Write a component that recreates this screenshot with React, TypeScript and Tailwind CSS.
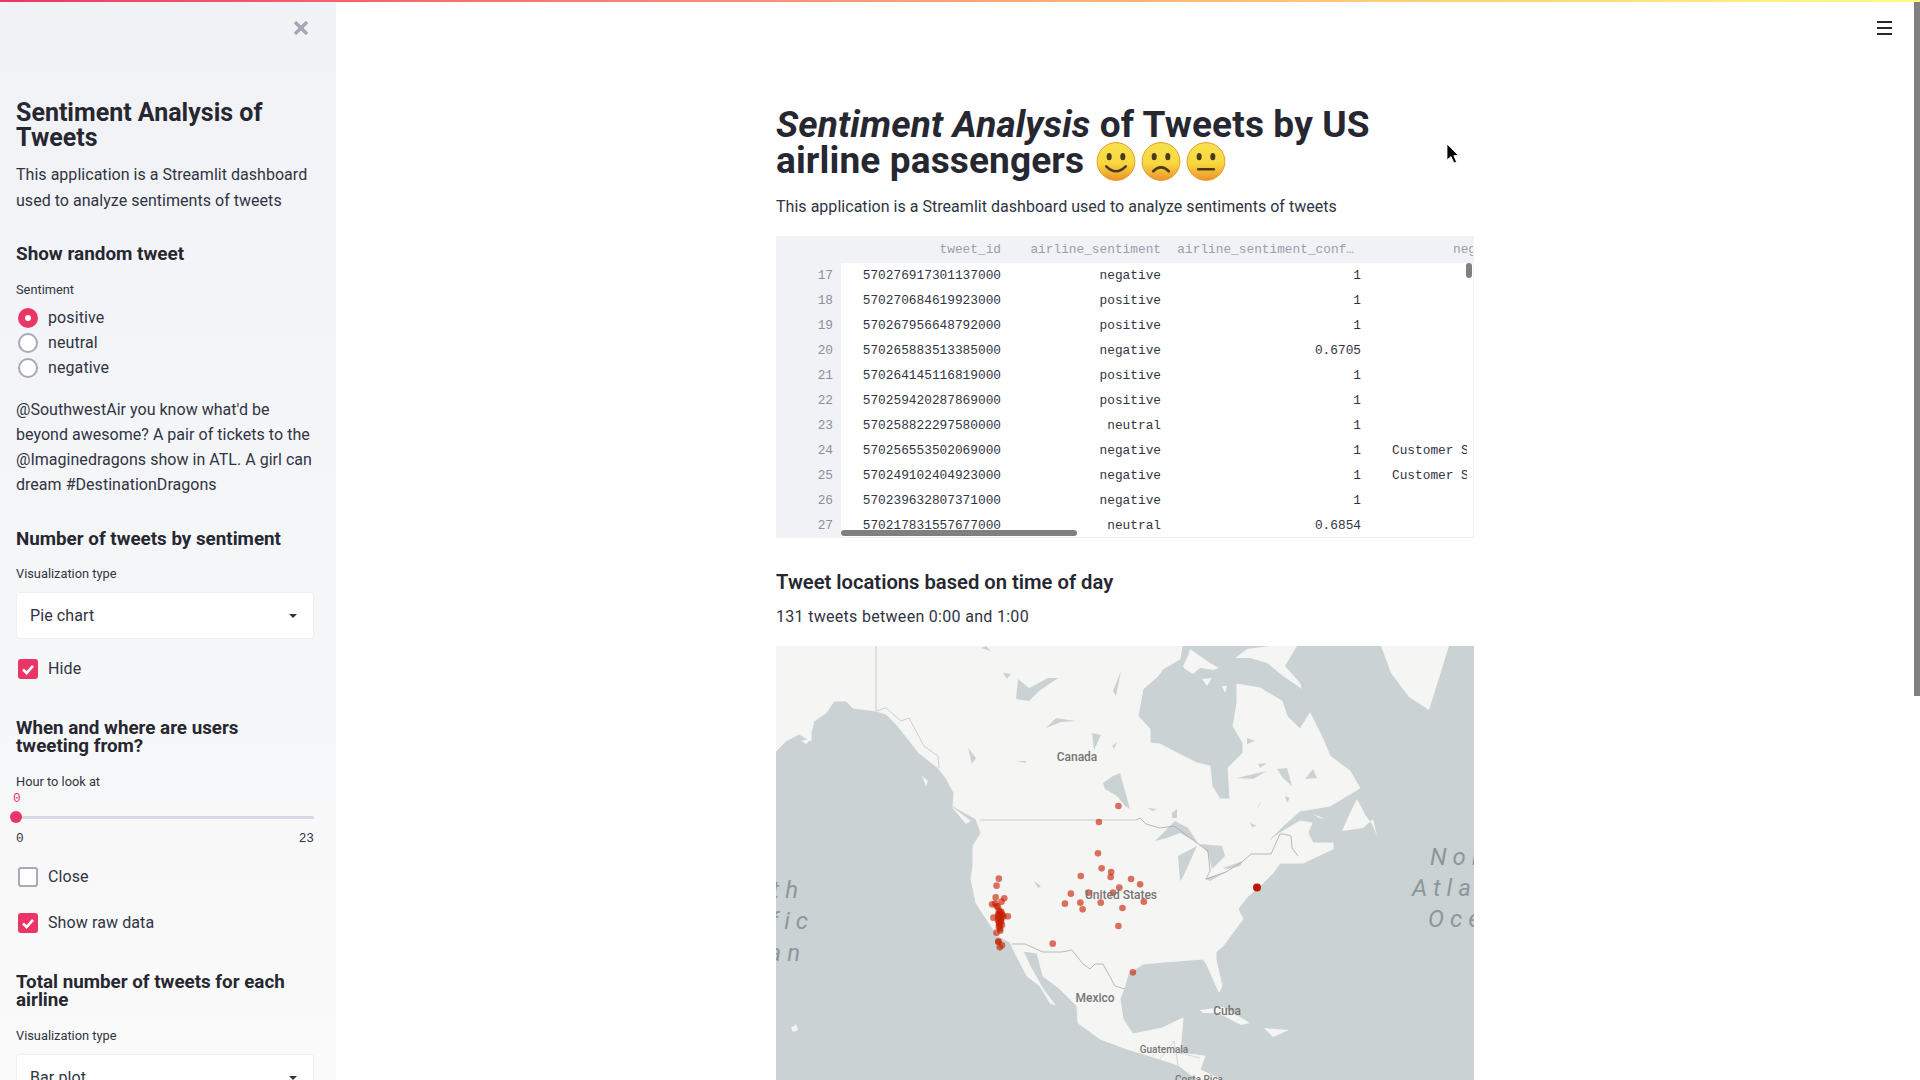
import React from "react";

const rows = [
  ["17", "570276917301137000", "negative", "1", ""],
  ["18", "570270684619923000", "positive", "1", ""],
  ["19", "570267956648792000", "positive", "1", ""],
  ["20", "570265883513385000", "negative", "0.6705", ""],
  ["21", "570264145116819000", "positive", "1", ""],
  ["22", "570259420287869000", "positive", "1", ""],
  ["23", "570258822297580000", "neutral", "1", ""],
  ["24", "570256553502069000", "negative", "1", "Customer Service Issue"],
  ["25", "570249102404923000", "negative", "1", "Customer Service Issue"],
  ["26", "570239632807371000", "negative", "1", ""],
  ["27", "570217831557677000", "neutral", "0.6854", ""],
];

const dots: [number, number][] = [
  [769,498],[726,546],[724,640],[732,685],[753,696],[752,711],[686,708],[797,717],[817,733],[771,743],[757,758],[703,758],[664,761],[651,791],[685,788],[730,788],[690,808],[778,804],[825,785],[769,858],[624,911],[801,997],
  [505,716],[500,737],[498,772],[517,775],[511,785],[490,793],[500,798],[497,790],[503,800],[505,812],[510,815],[505,820],[512,822],[515,830],[493,833],[525,829],[505,830],[510,836],[503,840],[510,845],[506,850],[512,855],[505,860],[508,866],[508,872],[500,878],[504,904],[504,906],[512,916],[507,922],[507,828],[503,826],[509,842],[505,848],[507,858],[508,818],[513,826],[505,836],
];

const land = "M0 105 L10 95 L23 88 L35 95 L35 87 L38 75 L50 67 L58 55 L70 55 L77 62 L100 65 L110 68 L120 78 L128 88 L143 107 L162 122 L170 132 L178 147 L177 160 L200 173 L205 187 L202 192 L197 200 L197 220 L195 233 L200 257 L213 277 L222 290 L234 296 L239 307 L251 330 L264 340 L274 357 L279 359 L267 343 L254 320 L247 305 L261 307 L267 330 L284 343 L301 360 L302 377 L324 393 L351 403 L374 410 L402 419 L422 434 L447 434 L424 424 L429 410 L404 407 L407 372 L386 382 L357 388 L347 373 L344 353 L349 340 L352 328 L367 318 L388 316 L427 313 L431 319 L443 346 L446 340 L440 314 L440 306 L447 300 L467 273 L462 263 L472 250 L481 243 L497 227 L504 217 L527 217 L557 203 L557 197 L537 197 L532 187 L536 177 L524 175 L504 187 L489 198 L507 180 L524 165 L554 160 L584 142 L574 125 L554 110 L547 93 L534 67 L524 83 L511 70 L506 55 L484 42 L461 38 L461 57 L457 80 L467 97 L467 107 L452 122 L454 153 L444 153 L436 140 L434 120 L421 117 L401 107 L384 98 L374 97 L374 83 L362 70 L367 43 L382 30 L387 23 L404 13 L406 0 L0 0 Z";

const islands = [
  "M407 20 L412 10 L414 3 L424 10 L434 17 L443 22 L437 24 L424 22 L417 28 L409 23 Z",
  "M459 12 L471 3 L494 0 L521 0 L509 20 L524 37 L526 43 L507 30 L491 17 L474 12 Z",
  "M426 33 L436 32 L431 40 Z",
  "M446 40 L451 40 L449 47 Z",
  "M605 0 L673 0 L653 64 L633 51 L615 27 Z",
  "M581 153 L574 167 L566 185 L587 182 L597 173 L601 190 L596 178 L590 170 Z",
  "M537 168 L549 173 L543 172 Z",
  "M424 364 L447 361 L474 377 L465 379 L442 367 L427 367 Z",
  "M488 382 L513 384 L497 391 Z",
  "M15 382 L20 378 L22 384 L17 386 Z",
  "M25 95 L36 92 L30 98 Z",
  "M130 85 L140 100 L150 112 L138 100 Z",
  "M146 130 L152 135 L150 140 Z",
  "M175 160 L195 175 L190 178 Z",
];

const lakes = [
  "M242 33 L253 42 L272 32 L282 32 L263 45 L253 55 L240 53 Z",
  "M270 82 L280 72 L300 75 L285 76 Z",
  "M316 87 L325 89 L318 104 Z",
  "M227 27 L235 28 L231 33 Z",
  "M205 2 L215 5 L210 0 Z",
  "M327 137 L337 130 L344 127 L354 163 L349 160 L341 150 L329 143 Z",
  "M379 195 L399 175 L412 182 L422 197 L404 187 L391 192 Z",
  "M402 210 L421 200 L406 233 L404 235 Z",
  "M424 198 L446 200 L449 210 L436 223 L432 207 Z",
  "M429 233 L452 225 L434 235 Z",
  "M447 222 L467 215 L464 220 L452 223 Z",
  "M461 132 L491 125 L477 133 Z",
  "M501 123 L511 122 L516 140 L507 132 Z",
  "M529 133 L537 123 L541 132 Z",
  "M481 163 L487 153 L482 160 Z",
  "M509 150 L514 152 L511 157 Z",
  "M474 177 L481 180 L476 181 Z",
  "M396 167 L401 163 L401 172 L396 172 Z",
  "M372 162 L381 163 L376 165 Z",
  "M471 92 L479 95 L471 98 Z",
  "M482 118 L491 117 L484 122 Z",
  "M240 115 L250 115 L250 117 Z",
  "M258 235 L265 240 L262 242 Z",
  "M336 100 L341 96 L338 103 Z",
  "M192 102 L200 112 L196 118 Z",
  "M337 45 L345 25 L340 50 Z",
];

function Emoji({ id, mouth }: { id: string; mouth: string }) {
  return (
    <svg viewBox="0 0 40 40" className="inline-block w-[40px] h-[39px] -my-[4px] ml-[2px] mr-[3px] align-[-4px]">
      <defs>
        <linearGradient id={id} x1="0" y1="0" x2="0" y2="1">
          <stop offset="0" stopColor="#f9e04f" />
          <stop offset="0.55" stopColor="#f8d840" />
          <stop offset="1" stopColor="#ec9428" />
        </linearGradient>
      </defs>
      <circle cx="20" cy="20" r="19.4" fill={"url(#" + id + ")"} stroke="#e39a2c" strokeWidth="1" />
      <ellipse cx="13" cy="15" rx="2.6" ry="3.6" fill="#4a3a1c" />
      <ellipse cx="27" cy="15" rx="2.6" ry="3.6" fill="#4a3a1c" />
      <path d={mouth} fill="none" stroke="#4a3a1c" strokeWidth="2.6" strokeLinecap="round" />
    </svg>
  );
}

function RadioRow({ label, on }: { label: string; on?: boolean }) {
  return (
    <div className="flex items-center h-[25px]">
      <span className={on ? "ml-[2px] w-[20px] h-[20px] rounded-full bg-[#ea3566] flex items-center justify-center" : "ml-[2px] w-[20px] h-[20px] rounded-full border-2 border-[#a6aab6] bg-white"}>
        {on && <span className="w-[6px] h-[6px] rounded-full bg-white" />}
      </span>
      <span className="ml-[10px] text-[16px] tracking-[0.1px] text-[#303442]">{label}</span>
    </div>
  );
}

function Check({ label, on }: { label: string; on?: boolean }) {
  return (
    <div className="flex items-center h-[24px]">
      <span className={on ? "ml-[2px] w-[20px] h-[20px] rounded-[3px] bg-[#ea3566] flex items-center justify-center" : "ml-[2px] w-[20px] h-[20px] rounded-[3px] border-2 border-[#a6aab6] bg-white"}>
        {on && (
          <svg viewBox="0 0 20 20" className="w-[20px] h-[20px]">
            <path d="M5 10.5 L8.6 14 L15 6.8" fill="none" stroke="#fff" strokeWidth="2.6" />
          </svg>
        )}
      </span>
      <span className="ml-[10px] text-[16px] tracking-[0.1px] text-[#303442]">{label}</span>
    </div>
  );
}

function Select({ label }: { label: string }) {
  return (
    <div className="ml-[1px] w-[296px] h-[45px] bg-white rounded-[3px] shadow-[0_0_0_1px_#eef0f4] flex items-center justify-between pl-[13px] pr-[16px]">
      <span className="text-[16px] tracking-[0.1px] text-[#303442]">{label}</span>
      <span className="w-0 h-0 border-x-[4px] border-x-transparent border-t-[4px] border-t-[#303442]" />
    </div>
  );
}

const mono = "font-['Liberation_Mono',monospace] text-[12.8px]";
const oceanLabel = "absolute -translate-y-1/2 text-[24px] italic tracking-[6px] text-[#8d9799] whitespace-nowrap";
const placeLabel = "absolute -translate-x-1/2 -translate-y-1/2 font-medium text-[#757575] whitespace-nowrap";

export default function App() {
  return (
    <div className="relative flex h-screen w-full overflow-hidden bg-white font-['Roboto','Noto_Sans',sans-serif] text-[#262730]">
      <div className="absolute top-0 left-0 right-0 h-[2px] z-20 bg-gradient-to-r from-[#ea3566] to-[#fffd80]" />

      <aside className="w-[336px] shrink-0 h-full overflow-hidden bg-gradient-to-b from-[#f0f2f6] to-[#fafafa] pl-[16px] pr-[22px]">
        <div className="h-[56px] flex justify-end items-start pt-[21px] pr-[6px]">
          <svg viewBox="0 0 14 14" className="w-[14px] h-[14px]">
            <path d="M1 1 L13 13 M13 1 L1 13" stroke="#a3a8b4" strokeWidth="3.4" />
          </svg>
        </div>
        <h2 className="mt-[45px] text-[25px] leading-[24.5px] font-bold text-[#262730]">Sentiment Analysis of Tweets</h2>
        <p className="mt-[12px] text-[16px] leading-[25.6px] tracking-[0.03px] text-[#303442]">This application is a Streamlit dashboard used to analyze sentiments of tweets</p>
        <h3 className="mt-[32px] text-[18.9px] leading-[18px] font-bold">Show random tweet</h3>
        <div className="mt-[19px] text-[12.8px] leading-[16px] text-[#303442]">Sentiment</div>
        <div className="mt-[7px]">
          <RadioRow label="positive" on />
          <RadioRow label="neutral" />
          <RadioRow label="negative" />
        </div>
        <p className="mt-[17px] text-[16px] leading-[25px] tracking-[0.03px] text-[#303442]">@SouthwestAir you know what'd be beyond awesome? A pair of tickets to the @Imaginedragons show in ATL. A girl can dream #DestinationDragons</p>
        <h3 className="mt-[33px] text-[18.8px] leading-[18px] font-bold">Number of tweets by sentiment</h3>
        <div className="mt-[18px] text-[12.8px] leading-[16px] text-[#303442]">Visualization type</div>
        <div className="mt-[11px]"><Select label="Pie chart" /></div>
        <div className="mt-[19px]"><Check label="Hide" on /></div>
        <h3 className="mt-[38px] text-[18.8px] leading-[18px] font-bold">When and where are users tweeting from?</h3>
        <div className="mt-[19px] text-[12.8px] leading-[16px] text-[#303442]">Hour to look at</div>
        <div className="mt-[2px] -ml-[3px] text-[12.8px] leading-[14px] text-[#ea3566] font-['Liberation_Mono',monospace]">0</div>
        <div className="relative mt-[5px] h-[12px] flex items-center">
          <div className="w-full h-[3px] rounded-full bg-[#d6dae4]" />
          <div className="absolute left-[-6px] top-0 w-[12px] h-[12px] rounded-full bg-[#ea3566]" />
        </div>
        <div className="mt-[9px] flex justify-between text-[12.8px] leading-[14px] text-[#303442] font-['Liberation_Mono',monospace]">
          <span>0</span>
          <span>23</span>
        </div>
        <div className="mt-[19px]"><Check label="Close" /></div>
        <div className="mt-[22px]"><Check label="Show raw data" on /></div>
        <h3 className="mt-[38px] text-[18.8px] leading-[18px] font-bold">Total number of tweets for each airline</h3>
        <div className="mt-[19px] text-[12.8px] leading-[16px] text-[#303442]">Visualization type</div>
        <div className="mt-[11px]"><Select label="Bar plot" /></div>
      </aside>

      <main className="flex-1 min-w-0 pr-[6px] overflow-hidden">
        <div className="mx-auto w-[698px]">
          <h1 className="mt-[107px] text-[37px] leading-[36px] tracking-[0.14px] font-bold text-[#262730]">
            <em className="italic">Sentiment Analysis</em> of Tweets by US airline passengers{" "}
            <Emoji id="e1" mouth="M10 25 Q20 35 30 25" />
            <Emoji id="e2" mouth="M12 30 Q20 22 28 30" />
            <Emoji id="e3" mouth="M12 28 L28 28" />
          </h1>
          <p className="mt-[16px] text-[16px] leading-[24px] tracking-[0.03px] text-[#303442]">This application is a Streamlit dashboard used to analyze sentiments of tweets</p>

          <div className={"relative mt-[17px] h-[302px] overflow-hidden border-b border-r border-[#f0f2f6] " + mono}>
            <div className="flex h-[27px] bg-[#f0f2f6] items-center leading-[27px] text-[#9a9eaa]">
              <div className="w-[65px] shrink-0" />
              <div className="w-[168px] shrink-0 text-right pr-[8px]">tweet_id</div>
              <div className="w-[160px] shrink-0 text-right pr-[8px]">airline_sentiment</div>
              <div className="w-[200px] shrink-0 text-right pr-[15px] whitespace-nowrap">airline_sentiment_conf…</div>
              <div className="flex-1 min-w-0 pl-[84px] whitespace-nowrap overflow-hidden">negativereason</div>
            </div>
            {rows.map((r) => (
              <div key={r[0]} className="flex h-[25px] items-center leading-[25px] text-[#303442]">
                <div className="w-[65px] h-[25px] shrink-0 bg-[#f0f2f6] text-right pr-[8px] text-[#8b8f9c]">{r[0]}</div>
                <div className="w-[168px] shrink-0 text-right pr-[8px]">{r[1]}</div>
                <div className="w-[160px] shrink-0 text-right pr-[8px]">{r[2]}</div>
                <div className="w-[200px] shrink-0 text-right pr-[8px]">{r[3]}</div>
                <div className="ml-[23px] w-[75px] shrink-0 whitespace-nowrap overflow-hidden">{r[4]}</div>
              </div>
            ))}
            <div className="absolute left-[65px] bottom-[1px] w-[236px] h-[6px] rounded-full bg-[#808080]" />
            <div className="absolute right-[1px] top-[27px] w-[6px] h-[15px] rounded-full bg-[#808080]" />
          </div>

          <h3 className="mt-[31px] text-[20.2px] leading-[26px] font-semibold text-[#262730]">Tweet locations based on time of day</h3>
          <p className="mt-[10px] text-[16px] leading-[24px] tracking-[0.3px] text-[#303442]">131 tweets between 0:00 and 1:00</p>

          <div className="relative mt-[17px] h-[434px] overflow-hidden bg-[#cad2d3]">
            <svg viewBox="0 0 698 434" className="absolute inset-0 w-full h-full">
              <path d={land} fill="#f5f5f3" stroke="#f5f5f3" strokeWidth="1" strokeLinejoin="round" />
              {islands.map((d) => <path key={d} d={d} fill="#f5f5f3" />)}
              {lakes.map((d) => <path key={d} d={d} fill="#cad2d3" />)}
              <path d="M100 0 V65 L110 62 L125 75 L133 72 L148 100 L162 110 L163 122" fill="none" stroke="#c8c9c7" strokeWidth="0.9" />
              <path d="M204 174 H360" fill="none" stroke="#d9d9d7" strokeWidth="1.6" />
              <path d="M360 174 L364 172 L370 178 L384 182 L398 180 L421 197 L432 205 L434 225 L430 233 L450 226 L466 216 L475 208 L495 208 L504 188 L507 188 L515 190 L516 202 L522 210" fill="none" stroke="#a8aaaa" strokeWidth="0.8" />
              <path d="M236 298 L249 298 L267 306 L286 306 L296 304 L307 318 L314 323 L319 318 L327 318 L339 340 L349 343" fill="none" stroke="#a8aaaa" strokeWidth="0.8" />
              <path d="M384 413 L398 395 L402 419 M404 407 L424 412" fill="none" stroke="#cfcfcd" strokeWidth="0.8" />
              {dots.map(([x, y], i) => (
                <circle key={i} cx={(x - 13) / 2.208} cy={(y - 18) / 3} r="3.3" fill="#c81e00" fillOpacity="0.62" />
              ))}
              <circle cx="481" cy="241.5" r="4" fill="#c01800" />
            </svg>
            <span className={placeLabel + " left-[301px] top-[111px] text-[12px]"}>Canada</span>
            <span className={placeLabel + " left-[345px] top-[249px] text-[12px]"}>United States</span>
            <span className={placeLabel + " left-[319px] top-[352px] text-[12px]"}>Mexico</span>
            <span className={placeLabel + " left-[451px] top-[365px] text-[12px]"}>Cuba</span>
            <span className={placeLabel + " left-[388px] top-[403px] text-[10px]"}>Guatemala</span>
            <span className={placeLabel + " left-[423px] top-[433px] text-[10px]"}>Costa Rica</span>
            <span className={oceanLabel + " left-[654px] top-[211px]"}>North</span>
            <span className={oceanLabel + " left-[636px] top-[242px]"}>Atlantic</span>
            <span className={oceanLabel + " left-[652px] top-[273px]"}>Ocean</span>
            <span className={oceanLabel + " right-[670px] top-[244px]"}>North</span>
            <span className={oceanLabel + " right-[660px] top-[275px]"}>Pacific</span>
            <span className={oceanLabel + " right-[668px] top-[307px]"}>Ocean</span>
          </div>
        </div>
      </main>

      <svg viewBox="0 0 15 14" className="absolute left-[1877px] top-[21px] w-[15px] h-[14px]">
        <path d="M0 1 H15 M0 7 H15 M0 13 H15" stroke="#262730" strokeWidth="2" />
      </svg>
      <svg viewBox="0 0 14 22" className="absolute left-[1446px] top-[143px] w-[14px] h-[22px]">
        <path d="M1 1 V17 L5 13.5 L8 20 L10.5 19 L7.8 12.6 L12.5 12.5 Z" fill="#000" stroke="#fff" strokeWidth="0.8" />
      </svg>
      <div className="absolute right-0 top-0 w-[6px] h-[696px] bg-[#808080] z-10" />
    </div>
  );
}
